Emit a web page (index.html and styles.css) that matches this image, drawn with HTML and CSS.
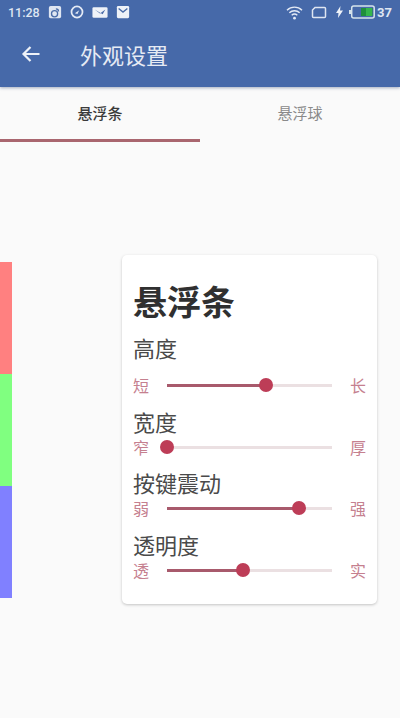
FILE: index.html
```html
<!DOCTYPE html>
<html lang="zh">
<head>
<meta charset="utf-8">
<title>外观设置</title>
<link rel="stylesheet" href="styles.css">
</head>
<body>
<header class="appbar">
  <div class="status">
    <div class="status-left">
      <span class="time">11:28</span>
      <svg class="si" viewBox="0 0 16 16"><rect x="1" y="1" width="14" height="14" rx="2" fill="#dfe6f2"/><circle cx="7.500" cy="10" r="3.500" fill="none" stroke="#4a6ca8" stroke-width="1.500"/><path d="M9 4.500a3 3 0 0 1 3 3" fill="none" stroke="#4a6ca8" stroke-width="1.500"/></svg>
      <svg class="si" viewBox="0 0 16 16"><circle cx="8" cy="8" r="6.300" fill="none" stroke="#e4eaf5" stroke-width="2"/><path d="M5.500 9.500 10.500 6 8.500 10.200z" fill="#e4eaf5"/></svg>
      <svg class="si wide" viewBox="0 0 18 14"><rect x="0.500" y="1" width="17" height="12" rx="1.500" fill="#eef2f8"/><path d="M3 3.500 9 8 15 3.500 12 9z" fill="#4a6ca8"/></svg>
      <svg class="si" viewBox="0 0 16 16"><rect x="1" y="1" width="14" height="14" rx="1.500" fill="#eef2f8"/><path d="M3 4 8 8 13 4" fill="none" stroke="#4a6ca8" stroke-width="1.600"/></svg>
    </div>
    <div class="status-right">
      <svg class="wifi" viewBox="0 0 18 16"><path d="M1 5.500a11.500 11.500 0 0 1 16 0M3.500 8.300a8 8 0 0 1 11 0M6 11a4.500 4.500 0 0 1 6 0" fill="none" stroke="#e4eaf5" stroke-width="1.500"/><circle cx="9" cy="14" r="1.500" fill="#e4eaf5"/></svg>
      <svg class="sim" viewBox="0 0 16 13"><path d="M4 1.500h9.500a1 1 0 0 1 1 1v8a1 1 0 0 1-1 1h-11a1 1 0 0 1-1-1V4z" fill="none" stroke="#dfe6f2" stroke-width="1.500"/></svg>
      <svg class="bolt" viewBox="0 0 7 12"><path d="M4.500 0 0 7h2.500L2 12l5-7.500H4z" fill="#eef2f8"/></svg>
      <svg class="batt" viewBox="0 0 26 14"><rect x="2.700" y="1" width="22.500" height="12" rx="2" fill="none" stroke="#d5e3ea" stroke-width="1.500"/><rect x="0" y="5" width="2" height="4" fill="#d5e3ea"/><rect x="12" y="3" width="11.500" height="8" fill="#1f8f3c"/><rect x="17" y="3" width="6" height="8" fill="#35b64c"/></svg>
      <span class="level">37</span>
    </div>
  </div>
  <div class="toolbar">
    <svg class="back" viewBox="0 0 20 18"><path d="M18.500 9H2.500M9.500 2 2.500 9l7 7" fill="none" stroke="#eef2f8" stroke-width="2.200"/></svg>
    <h1 class="title">外观设置</h1>
  </div>
</header>
<nav class="tabs">
  <div class="tab active">悬浮条</div>
  <div class="tab">悬浮球</div>
</nav>
<main class="stage">
  <div class="strip">
    <div class="band red"></div>
    <div class="band green"></div>
    <div class="band blue"></div>
  </div>
  <section class="card">
    <h2 class="card-title">悬浮条</h2>
    <div class="group first">
      <div class="label">高度</div>
      <div class="row"><span class="end">短</span><div class="track"><div class="fill" style="width:60%"></div><div class="thumb" style="left:60%"></div></div><span class="end">长</span></div>
    </div>
    <div class="group second">
      <div class="label">宽度</div>
      <div class="row"><span class="end">窄</span><div class="track"><div class="fill" style="width:0%"></div><div class="thumb" style="left:0%"></div></div><span class="end">厚</span></div>
    </div>
    <div class="group third">
      <div class="label">按键震动</div>
      <div class="row"><span class="end">弱</span><div class="track"><div class="fill" style="width:80%"></div><div class="thumb" style="left:80%"></div></div><span class="end">强</span></div>
    </div>
    <div class="group fourth">
      <div class="label">透明度</div>
      <div class="row"><span class="end">透</span><div class="track"><div class="fill" style="width:46%"></div><div class="thumb" style="left:46%"></div></div><span class="end">实</span></div>
    </div>
  </section>
</main>
</body>
</html>
```
FILE: styles.css
```css
* { box-sizing: border-box; }
html, body { margin: 0; padding: 0; }
body {
  width: 400px;
  height: 718px;
  overflow: hidden;
  background: #fafafa;
  font-family: "Noto Sans CJK SC", "Roboto", sans-serif;
  display: flex;
  flex-direction: column;
}
.appbar {
  height: 87px;
  background: #4669a9;
  box-shadow: 0 1px 3px rgba(60, 80, 120, .45);
  color: #eef2f8;
  position: relative;
}
.status {
  height: 24px;
  padding: 0 8px;
  display: flex;
  justify-content: space-between;
  align-items: center;
}
.status-left, .status-right { display: flex; align-items: center; }
.time { font: 500 12.500px Roboto, sans-serif; color: #dfe6f2; margin-right: 8px; }
.si { width: 14px; height: 14px; margin-right: 8px; }
.si.wide { width: 16px; height: 13px; }
.wifi { width: 17px; height: 15px; margin-right: 8px; }
.sim { width: 16px; height: 13px; margin-right: 9px; }
.bolt { width: 7px; height: 12px; margin-right: 6px; }
.batt { width: 26px; height: 14px; margin-right: 2px; }
.level { font: 700 13px Roboto, sans-serif; color: #dfe6f2; }
.toolbar {
  height: 60px;
  display: flex;
  align-items: center;
  padding: 0 0 0 21px;
}
.back { width: 20px; height: 18px; margin-right: 39px; }
.title { margin: 0; font-size: 22px; font-weight: 400; color: #e6ebf4; line-height: 1; }
.tabs { height: 55px; display: flex; }
.tab {
  width: 200px;
  text-align: center;
  font-size: 15px;
  line-height: 52px;
  color: #8a8a8a;
  border-bottom: 3px solid transparent;
}
.tab.active { color: #3a3a3a; font-weight: 500; border-bottom-color: #a9666f; }
.stage {
  flex: 1;
  display: flex;
  justify-content: space-between;
  align-items: flex-start;
  padding: 113px 23px 0 0;
}
.strip { width: 12px; margin-top: 7px; }
.band { height: 112px; }
.red { background: #ff8080; }
.green { background: #80ff80; }
.blue { background: #8080ff; }
.card {
  width: 255px;
  height: 349px;
  background: #fff;
  border-radius: 5px;
  box-shadow: 0 1px 3px rgba(0, 0, 0, .22);
  padding: 25px 11px 0 11px;
}
.card-title {
  margin: 0;
  font-size: 34px;
  font-weight: 700;
  line-height: 41px;
  color: #303030;
}
.group.first { margin-top: 12px; }
.group.second { margin-top: 10px; }
.group.third { margin-top: 9px; }
.group.fourth { margin-top: 10px; }
.label { font-size: 22px; line-height: 28px; color: #4a4a4a; }
.row { display: flex; align-items: center; justify-content: space-between; height: 24px; }
.first .row { margin-top: 12px; }
.end { font-size: 16px; line-height: 20px; color: #c5808f; width: 16px; }
.track {
  position: relative;
  width: 165px;
  height: 3px;
  background: #ebe0e2;
  margin: 0 18px;
}
.fill { height: 100%; background: #a85a6c; }
.thumb {
  position: absolute;
  top: 50%;
  width: 14px;
  height: 14px;
  border-radius: 50%;
  background: #bd3d57;
  transform: translate(-50%, -50%);
}
```
